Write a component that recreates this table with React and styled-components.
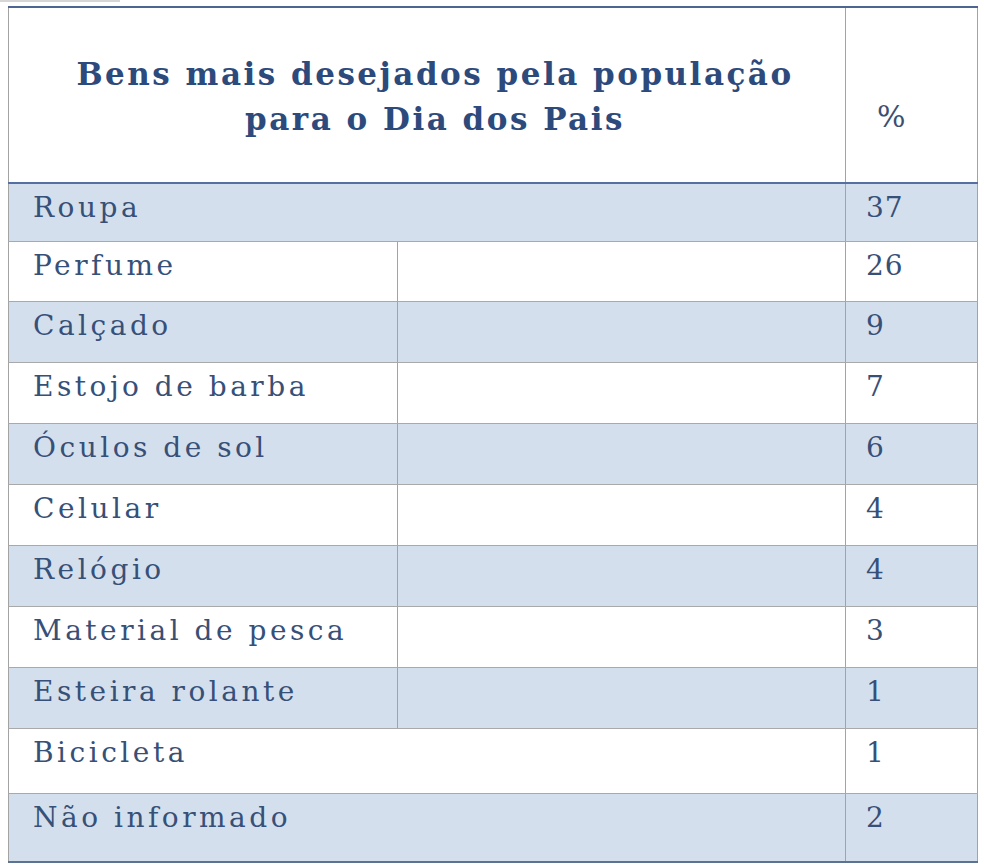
import styled, { createGlobalStyle } from "styled-components";

const Global = createGlobalStyle`
  html, body {
    margin: 0;
    padding: 0;
    background: #ffffff;
  }
  body {
    font-family: "DejaVu Serif", "Liberation Serif", serif;
  }
`;

const Page = styled.div`
  padding: 6px 0 0 8px;
  width: 984px;
  height: 868px;
  box-sizing: border-box;
  position: relative;
`;

// faint grey rule at the top-left corner of the original capture
const Corner = styled.div`
  position: absolute;
  left: 0;
  top: 0;
  width: 120px;
  height: 2px;
  background: #d6d6d6;
`;

const Table = styled.table`
  width: 969px;
  table-layout: fixed;
  border-collapse: collapse;
  border-top: 2px solid #4c6593;
  border-bottom: 2px solid #5b7391;
  border-left: 1px solid #a3a3a3;
  border-right: 1px solid #a3a3a3;
  color: #375077;
`;

const TitleCell = styled.th`
  height: 130px;
  padding: 44px 0 0 16px;
  border-bottom: 2px solid #5470a0;
  border-right: 1px solid #a3a3a3;
  text-align: center;
  vertical-align: top;
  font-size: 31px;
  font-weight: bold;
  letter-spacing: 2.5px;
  line-height: 45px;
  color: #2d4a7c;
`;

const PctCell = styled.th`
  height: 88px;
  padding: 86px 0 0 31px;
  border-bottom: 2px solid #5470a0;
  text-align: left;
  vertical-align: top;
  font-size: 30px;
  font-weight: normal;
  line-height: 45px;
  color: #3b4f72;
`;

const Row = styled.tr`
  background: ${(p) => (p.$shade ? "#d4dfee" : "#ffffff")};
`;

const Cell = styled.td`
  height: ${(p) => p.$h}px;
  padding: 7px 0 0 ${(p) => (p.$num ? "20px" : "24px")};
  border-bottom: 1px solid #a9a9a9;
  border-right: 1px solid #a3a3a3;
  vertical-align: top;
  font-size: 28px;
  line-height: 34px;
  letter-spacing: ${(p) => (p.$num ? "1px" : "3.5px")};
  white-space: nowrap;
  box-sizing: border-box;
`;

const rows = [
  { item: "Roupa", pct: "37", span: true, h: 58 },
  { item: "Perfume", pct: "26", h: 60 },
  { item: "Calçado", pct: "9", h: 61 },
  { item: "Estojo de barba", pct: "7", h: 61 },
  { item: "Óculos de sol", pct: "6", h: 61 },
  { item: "Celular", pct: "4", h: 61 },
  { item: "Relógio", pct: "4", h: 61 },
  { item: "Material de pesca", pct: "3", h: 61 },
  { item: "Esteira rolante", pct: "1", h: 61 },
  { item: "Bicicleta", pct: "1", span: true, h: 65 },
  { item: "Não informado", pct: "2", span: true, h: 69 },
];

export default function App() {
  return (
    <Page>
      <Global />
      <Corner />
      <Table>
        <colgroup>
          <col style={{ width: 389 }} />
          <col style={{ width: 448 }} />
          <col style={{ width: 132 }} />
        </colgroup>
        <thead>
          <tr>
            <TitleCell colSpan={2}>
              Bens mais desejados pela população
              <br />
              para o Dia dos Pais
            </TitleCell>
            <PctCell>%</PctCell>
          </tr>
        </thead>
        <tbody>
          {rows.map((r, i) => (
            <Row key={r.item} $shade={i % 2 === 0}>
              {r.span ? (
                <Cell colSpan={2} $h={r.h}>{r.item}</Cell>
              ) : (
                <>
                  <Cell $h={r.h}>{r.item}</Cell>
                  <Cell $h={r.h} />
                </>
              )}
              <Cell $h={r.h} $num>{r.pct}</Cell>
            </Row>
          ))}
        </tbody>
      </Table>
    </Page>
  );
}
